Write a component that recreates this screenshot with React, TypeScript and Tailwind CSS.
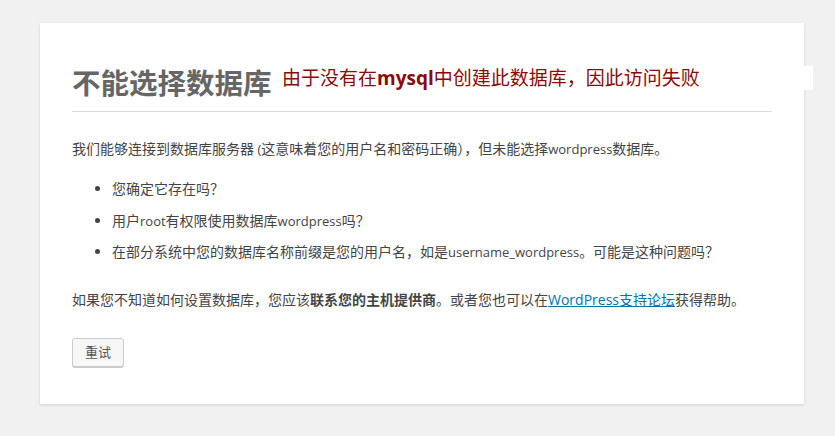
export default function App() {
  const latin = "text-[13px]";

  return (
    <div
      className="min-h-screen bg-[#f1f1f1] pt-[23px] pl-[40px] text-[#444]"
      style={{ fontFamily: '"Open Sans", "Noto Sans CJK SC", sans-serif' }}
    >
      <div className="relative w-[764px] bg-white px-8 pt-[43px] pb-[37px] shadow-[0_1px_3px_rgba(0,0,0,0.13)]">
        <h1 className="border-b border-[#dcdcdc] pb-[11px] text-[28.5px] font-bold leading-[34px] text-[#666]">
          不能选择数据库
        </h1>
        <div className="absolute left-[242px] right-[-9px] top-[43px] h-[24px] bg-white text-[19px] leading-[24px] text-[#8b0a0a]">
          由于没有在<span className="font-bold">mysql</span>中创建此数据库，因此访问失败
        </div>

        <p className="mt-[27px] text-[14px] leading-[20px]">
          我们能够连接到数据库服务器<span className={latin}> (</span>
          这意味着您的用户名和密码正确），但未能选择
          <span className={latin}>wordpress</span>数据库。
        </p>

        <ul className="mt-[20px] list-disc pl-[40px] text-[14px] leading-[20px]">
          <li className="mb-[11.5px]">您确定它存在吗？</li>
          <li className="mb-[11.5px]">
            用户<span className={latin}>root</span>有权限使用数据库
            <span className={latin}>wordpress</span>吗？
          </li>
          <li>
            在部分系统中您的数据库名称前缀是您的用户名，如是
            <span className={latin}>username_wordpress</span>。可能是这种问题吗？
          </li>
        </ul>

        <p className="mt-[28px] text-[14px] leading-[20px]">
          如果您不知道如何设置数据库，您应该<strong>联系您的主机提供商</strong>。或者您也可以在
          <a href="#" className="text-[#0073aa] underline">
            <span className="text-[14px]">WordPress</span>支持论坛
          </a>
          获得帮助。
        </p>

        <button className="mt-[28px] h-[29px] rounded-[3px] border border-[#ccc] bg-[#f7f7f7] px-[12px] text-[13px] leading-[27px] text-[#555] shadow-[0_1px_0_#ccc]">
          重试
        </button>
      </div>
    </div>
  );
}
